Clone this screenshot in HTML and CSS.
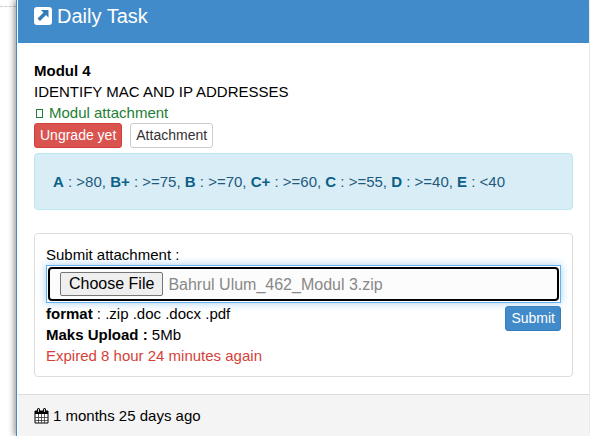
FILE: index.html
```html
<!DOCTYPE html>
<html lang="en">
<head>
<meta charset="utf-8">
<meta name="viewport" content="width=device-width, initial-scale=1">
<title>Daily Task</title>
<link rel="stylesheet" href="styles.css">
</head>
<body>
<div class="rail"></div>
<main class="panel">
  <header class="panel-header">
    <svg class="icon-task" viewBox="0 0 18 18" aria-hidden="true">
      <rect width="18" height="18" rx="3" fill="#fff"/>
      <path d="M7 3h7.500v7.500l-2.500-2.500-6 6-2.500-2.500 6-6z" fill="#337ab7"/>
    </svg>
    <h1>Daily Task</h1>
  </header>
  <section class="panel-body">
    <strong class="line">Modul 4</strong>
    <div class="line">IDENTIFY MAC AND IP ADDRESSES</div>
    <a class="line module-link" href="#"><span class="glyph"></span>Modul attachment</a>
    <div class="actions">
      <button type="button" class="btn btn-danger">Ungrade yet</button>
      <button type="button" class="btn btn-default">Attachment</button>
    </div>
    <div class="alert"><b>A</b> : &gt;80, <b>B+</b> : &gt;=75, <b>B</b> : &gt;=70, <b>C+</b> : &gt;=60, <b>C</b> : &gt;=55, <b>D</b> : &gt;=40, <b>E</b> : &lt;40</div>
    <form class="well">
      <label class="line" for="attachment">Submit attachment :</label>
      <div class="file-control">
        <div class="file-field">
          <span class="file-button">Choose File</span>
          <span class="file-name">Bahrul Ulum_462_Modul 3.zip</span>
        </div>
        <input type="file" id="attachment" class="file-input" accept=".zip,.doc,.docx,.pdf">
      </div>
      <div class="form-row">
        <div>
          <div class="line"><b>format</b> : .zip .doc .docx .pdf</div>
          <div class="line"><b>Maks Upload :</b> 5Mb</div>
          <div class="line expired">Expired 8 hour 24 minutes again</div>
        </div>
        <button type="submit" class="btn btn-primary">Submit</button>
      </div>
    </form>
  </section>
  <footer class="panel-footer">
    <svg class="icon-calendar" viewBox="0 0 15 16" aria-hidden="true">
      <path d="M1 3h13v12H1z" fill="#fff" stroke="#000"/>
      <path d="M1 3h13v3H1z"/>
      <path d="M4.500 6v9M7.500 6v9M10.500 6v9M1 9.500h13M1 12.500h13" stroke="#333" stroke-width=".8"/>
      <rect x="3" width="3" height="5" rx="1.500"/>
      <rect x="9" width="3" height="5" rx="1.500"/>
      <path d="M4.500 1v3M10.500 1v3" stroke="#fff" stroke-width=".8"/>
    </svg>
    <span>1 months 25 days ago</span>
  </footer>
</main>
</body>
</html>
```
FILE: styles.css
```css
* { box-sizing: border-box; }

body {
  margin: 0;
  min-height: 100vh;
  display: flex;
  overflow-x: hidden;
  background: #fff;
  color: #000;
  font: 15px/21px "Liberation Sans", Arial, sans-serif;
}

.rail {
  flex: 0 0 16px;
  height: 7px;
  border-bottom: 1px dashed #ccc;
}

.panel {
  flex: 1;
  display: flex;
  flex-direction: column;
  margin-right: 1px;
  padding-left: 1px;
  border-left: 1px solid #428bca;
  background: #fff;
  box-shadow: -2px 0 6px rgba(0, 0, 0, .4);
}

.panel-header {
  display: flex;
  align-items: center;
  gap: 5px;
  height: 43px;
  padding: 0 16px 11px;
  background: #428bca;
  color: #fff;
}

.panel-header h1 {
  margin: 0;
  font-size: 20px;
  font-weight: 400;
  line-height: 32px;
}

.icon-task { width: 18px; height: 18px; }

.panel-body { flex: 1; padding: 17px 16px; }

.line { display: block; }

.module-link {
  color: #1e7e34;
  text-decoration: none;
}

.glyph {
  display: inline-block;
  width: 7px;
  height: 9px;
  margin: 0 6px 0 2px;
  border: 1px solid #1e7e34;
}

.actions { display: flex; gap: 8px; }

.btn {
  height: 25px;
  padding: 0 5px;
  border: 1px solid;
  border-radius: 3px;
  font: 14px/21px "Liberation Sans", Arial, sans-serif;
}

.btn-danger { background: #d9534f; border-color: #d43f3a; color: #fff; }
.btn-default { background: #fff; border-color: #ccc; color: #333; }
.btn-primary { background: #428bca; border-color: #357ebd; color: #fff; }

.alert {
  margin: 5px 0 23px;
  padding: 17px 18px;
  border: 1px solid #bce8f1;
  border-radius: 4px;
  background: #d9edf7;
  color: #235a7c;
}

.alert b { color: #0c5f86; }

.well {
  padding: 10px 11px;
  border: 1px solid #ddd;
  border-radius: 4px;
}

.file-control {
  position: relative;
  padding: 1px;
  border: 1px solid #66afe9;
  box-shadow: 0 0 8px rgba(102, 175, 233, .6);
}

.file-field {
  display: flex;
  align-items: center;
  gap: 5px;
  height: 34px;
  padding: 0 10px;
  border: 2px solid #000;
  border-radius: 4px;
  background: #fcfcfc;
  color: #888;
  font-size: 16px;
}

.file-button {
  padding: 0 8px;
  border: 1px solid #767676;
  border-radius: 2px;
  background: #efefef;
  color: #000;
  line-height: 22px;
}

.file-input {
  position: absolute;
  inset: 0;
  width: 100%;
  height: 100%;
  opacity: 0;
}

.form-row {
  display: flex;
  justify-content: space-between;
  align-items: flex-start;
}

.form-row .btn { margin-top: 3px; }

.expired { color: #d43f3a; }

.panel-footer {
  display: flex;
  align-items: center;
  gap: 4px;
  padding: 10px 16px;
  border-top: 1px solid #ddd;
  background: #f4f4f4;
}

.icon-calendar { width: 15px; height: 16px; }
```
